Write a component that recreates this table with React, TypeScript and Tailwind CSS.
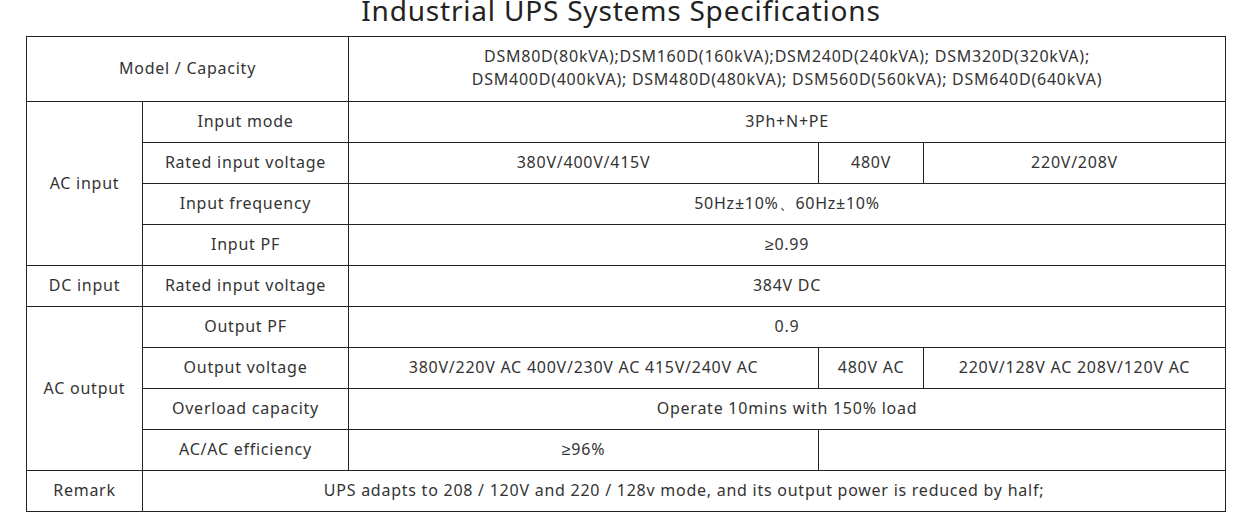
import React from "react";

const cell = "border border-[#222] text-center align-middle px-2 pb-[2px]";

export default function App() {
    return (
        <div className="w-[1242px] h-[513px] overflow-hidden bg-white text-[#333] font-['Noto_Sans',sans-serif] tracking-[0.75px]">
            <div className="h-[36px] overflow-hidden flex justify-center">
                <h1 className="text-[28px] leading-none -mt-[4px] font-normal text-[#222] tracking-[0.8px]">
                    Industrial UPS Systems Specifications
                </h1>
            </div>
            <table className="ml-[26px] w-[1199px] table-fixed border-collapse text-[16px]">
                <colgroup>
                    <col className="w-[116px]" />
                    <col className="w-[206px]" />
                    <col className="w-[470px]" />
                    <col className="w-[105px]" />
                    <col className="w-[302px]" />
                </colgroup>
                <tbody>
                    <tr className="h-[65px]">
                        <td colSpan={2} className={cell}>Model / Capacity</td>
                        <td colSpan={3} className={`${cell} leading-[23px]`}>
                            DSM80D(80kVA);DSM160D(160kVA);DSM240D(240kVA); DSM320D(320kVA);
                            <br />
                            DSM400D(400kVA); DSM480D(480kVA); DSM560D(560kVA); DSM640D(640kVA)
                        </td>
                    </tr>
                    <tr className="h-[41px]">
                        <td rowSpan={4} className={cell}>AC input</td>
                        <td className={cell}>Input mode</td>
                        <td colSpan={3} className={cell}>3Ph+N+PE</td>
                    </tr>
                    <tr className="h-[41px]">
                        <td className={cell}>Rated input voltage</td>
                        <td className={cell}>380V/400V/415V</td>
                        <td className={cell}>480V</td>
                        <td className={cell}>220V/208V</td>
                    </tr>
                    <tr className="h-[41px]">
                        <td className={cell}>Input frequency</td>
                        <td colSpan={3} className={cell}>50Hz±10%、60Hz±10%</td>
                    </tr>
                    <tr className="h-[41px]">
                        <td className={cell}>Input PF</td>
                        <td colSpan={3} className={cell}>≥0.99</td>
                    </tr>
                    <tr className="h-[41px]">
                        <td className={cell}>DC input</td>
                        <td className={cell}>Rated input voltage</td>
                        <td colSpan={3} className={cell}>384V DC</td>
                    </tr>
                    <tr className="h-[41px]">
                        <td rowSpan={4} className={cell}>AC output</td>
                        <td className={cell}>Output PF</td>
                        <td colSpan={3} className={cell}>0.9</td>
                    </tr>
                    <tr className="h-[41px]">
                        <td className={cell}>Output voltage</td>
                        <td className={cell}>380V/220V AC 400V/230V AC 415V/240V AC</td>
                        <td className={cell}>480V AC</td>
                        <td className={cell}>220V/128V AC 208V/120V AC</td>
                    </tr>
                    <tr className="h-[41px]">
                        <td className={cell}>Overload capacity</td>
                        <td colSpan={3} className={cell}>Operate 10mins with 150% load</td>
                    </tr>
                    <tr className="h-[41px]">
                        <td className={cell}>AC/AC efficiency</td>
                        <td className={cell}>≥96%</td>
                        <td colSpan={2} className={cell}></td>
                    </tr>
                    <tr className="h-[41px]">
                        <td className={cell}>Remark</td>
                        <td colSpan={4} className={cell}>
                            UPS adapts to 208 / 120V and 220 / 128v mode, and its output power is reduced by half;
                        </td>
                    </tr>
                </tbody>
            </table>
        </div>
    );
}
